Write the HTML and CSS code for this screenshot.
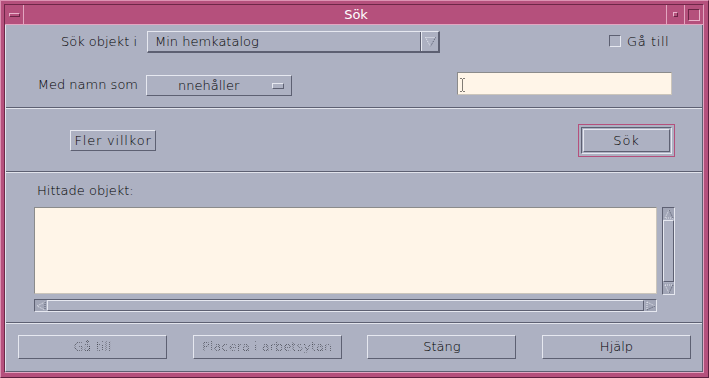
FILE: index.html
```html
<!DOCTYPE html>
<html lang="sv">
<head>
<meta charset="utf-8">
<title>Sök</title>
<link rel="stylesheet" href="styles.css">
</head>
<body>
<div class="window">
  <div class="inner">
    <div class="titlebar">
      <div class="tb-menu"><span class="dash"></span></div>
      <div class="tb-title">Sök</div>
      <div class="tb-min"><span class="dot"></span></div>
      <div class="tb-max"><span class="sq"></span></div>
    </div>
    <div class="content">
      <div class="row row1">
        <span class="label l1">Sök objekt i</span>
        <div class="combo">
          <span class="combo-text">Min hemkatalog</span>
          <span class="combo-arrow">
            <svg width="13" height="12" viewBox="0 0 13 12">
              <path d="M1.5 1.5 L6.5 10.5" stroke="#e8eaf2" stroke-width="1" stroke-dasharray="1 1" fill="none"/>
              <path d="M1.5 1.5 L11.5 1.5" stroke="#e8eaf2" stroke-width="1" stroke-dasharray="1 1" fill="none"/>
              <path d="M11.5 1.5 L6.5 10.5" stroke="#555a6c" stroke-width="1" stroke-dasharray="1 1" fill="none"/>
            </svg>
          </span>
        </div>
        <div class="check"><span class="box"></span><span>Gå till</span></div>
      </div>
      <div class="row row2">
        <span class="label l2">Med namn som</span>
        <div class="optmenu"><span class="opt-text">nnehåller</span><span class="ind"></span></div>
        <div class="textfield">
          <svg class="ibeam" width="5" height="14" viewBox="0 0 5 14">
            <path d="M0.5 0.5 h1 M3.5 0.5 h1 M2.5 1.5 v11 M0.5 13.5 h1 M3.5 13.5 h1" stroke="#000" stroke-width="1" stroke-dasharray="1 1" fill="none"/>
          </svg>
        </div>
      </div>
      <div class="sep sep1"></div>
      <div class="row row3">
        <button class="btn fler">Fler villkor</button>
        <div class="default">
          <div class="etch">
            <button class="btn sok">Sök</button>
          </div>
        </div>
      </div>
      <div class="sep sep2"></div>
      <div class="found">Hittade objekt:</div>
      <div class="listarea">
        <div class="listrow">
          <div class="list"></div>
          <div class="vscroll">
            <div class="arrowbox">
              <svg width="10" height="10" viewBox="0 0 10 10"><path d="M5 1 L1 9 L9 9" stroke="#e8eaf2" stroke-dasharray="1 1" fill="none"/><path d="M5 1 L9 9" stroke="#555a6c" stroke-dasharray="1 1" fill="none"/></svg>
            </div>
            <div class="vthumb"></div>
            <div class="arrowbox">
              <svg width="10" height="10" viewBox="0 0 10 10"><path d="M1 1 L5 9 M1 1 L9 1" stroke="#e8eaf2" stroke-dasharray="1 1" fill="none"/><path d="M9 1 L5 9" stroke="#555a6c" stroke-dasharray="1 1" fill="none"/></svg>
            </div>
          </div>
        </div>
        <div class="hscroll">
          <div class="arrowbox">
            <svg width="10" height="10" viewBox="0 0 10 10"><path d="M9 1 L1 5 L9 9" stroke="#e8eaf2" stroke-dasharray="1 1" fill="none"/><path d="M9 1 L9 9" stroke="#555a6c" stroke-dasharray="1 1" fill="none"/></svg>
          </div>
          <div class="hthumb"></div>
          <div class="arrowbox">
            <svg width="10" height="10" viewBox="0 0 10 10"><path d="M1 1 L9 5 M1 1 L1 9" stroke="#e8eaf2" stroke-dasharray="1 1" fill="none"/><path d="M9 5 L1 9" stroke="#555a6c" stroke-dasharray="1 1" fill="none"/></svg>
          </div>
        </div>
      </div>
      <div class="sep sep3"></div>
      <div class="buttons">
        <button class="btn bottom disabled"><span class="stipple">Gå till</span></button>
        <button class="btn bottom disabled"><span class="stipple">Placera i arbetsytan</span></button>
        <button class="btn bottom">Stäng</button>
        <button class="btn bottom">Hjälp</button>
      </div>
    </div>
  </div>
</div>
</body>
</html>
```

FILE: styles.css
```css
* { box-sizing: border-box; }

body {
  margin: 0;
  background: #adb1c2;
  font-family: "DejaVu Sans", "Liberation Sans", sans-serif;
  font-size: 13px;
  font-weight: 300;
  color: #000;
}

.window {
  width: 709px;
  height: 378px;
  background: #b5507c;
  border: 1px solid;
  border-color: #dc93b3 #5e1f3e #5e1f3e #dc93b3;
  padding: 3px 4px 4px 3px;
}

.inner {
  height: 100%;
  border: 1px solid;
  border-color: #6e2748 #e3a6c1 #e3a6c1 #6e2748;
  display: flex;
  flex-direction: column;
}

/* Title bar */
.titlebar {
  height: 20px;
  display: flex;
  border-bottom: 1px solid #e3a6c1;
  background: #b5507c;
}

.tb-menu {
  width: 19px;
  border-right: 1px solid #e3a6c1;
  display: flex;
  align-items: center;
  justify-content: center;
}

.dash {
  width: 11px;
  height: 4px;
  border: 1px solid;
  border-color: #eab3cb #6a2545 #6a2545 #eab3cb;
}

.tb-title {
  flex: 1;
  color: #fff;
  font-weight: 400;
  text-align: center;
  line-height: 19px;
  padding-left: 22px;
  border-right: 1px solid #e3a6c1;
}

.tb-min {
  width: 18px;
  border-right: 1px solid #e3a6c1;
  display: flex;
  align-items: center;
  justify-content: center;
}

.dot {
  width: 5px;
  height: 5px;
  border: 1px solid;
  border-color: #eab3cb #6a2545 #6a2545 #eab3cb;
}

.tb-max {
  width: 18px;
  display: flex;
  align-items: center;
  justify-content: center;
}

.sq {
  width: 12px;
  height: 12px;
  border: 1px solid;
  border-color: #6a2545 #eab3cb #eab3cb #6a2545;
}

/* Content */
.content {
  flex: 1;
  background: #adb1c2;
  border-left: 1px solid #e2e4ec;
  border-right: 1px solid #5d6072;
  border-bottom: 1px solid #5d6072;
  display: flex;
  flex-direction: column;
}

.row { display: flex; }

.label { text-align: right; white-space: nowrap; }

.row1 {
  margin-top: 6px;
  height: 22px;
  align-items: center;
}

.l1 { width: 131px; margin-top: -2px; }

.combo {
  margin-left: 10px;
  width: 293px;
  height: 22px;
  display: flex;
  border-style: solid;
  border-width: 1px 2px 2px 1px;
  border-color: #e6e8f0 #5d6072 #5d6072 #e6e8f0;
}

.combo-text {
  flex: 1;
  padding-left: 7px;
  line-height: 20px;
}

.combo-arrow {
  width: 18px;
  border-left: 1px solid #5d6072;
  box-shadow: inset 1px 0 0 #e6e8f0;
  display: flex;
  align-items: center;
  justify-content: center;
  padding-left: 2px;
}

.check {
  margin-left: 169px;
  display: flex;
  align-items: center;
  gap: 6px;
  margin-top: -2px;
  letter-spacing: 0.6px;
}

.box {
  width: 12px;
  height: 12px;
  border: 1px solid;
  border-color: #5d6072 #e6e8f0 #e6e8f0 #5d6072;
}

.row2 {
  margin-top: 19px;
  height: 24px;
  align-items: flex-start;
}

.l2 {
  width: 132px;
  line-height: 18px;
  margin-top: 4px;
}

.optmenu {
  margin-left: 8px;
  margin-top: 3px;
  width: 146px;
  height: 21px;
  border: 1px solid;
  border-color: #e6e8f0 #5d6072 #5d6072 #e6e8f0;
  display: flex;
  align-items: center;
}

.opt-text {
  flex: 1;
  padding-left: 31px;
  line-height: 19px;
}

.ind {
  width: 12px;
  height: 6px;
  margin-right: 7px;
  border: 1px solid;
  border-color: #e6e8f0 #5d6072 #5d6072 #e6e8f0;
}

.textfield {
  margin-left: 165px;
  width: 215px;
  height: 23px;
  background: #fff5e8;
  border: 1px solid;
  border-color: #8b8b8b #cbc5bb #cbc5bb #8b8b8b;
  padding: 5px 0 0 2px;
}

.ibeam { display: block; }

.sep {
  height: 2px;
  border-top: 1px solid #5d6072;
  border-bottom: 1px solid #e2e4ec;
}

.sep1 { margin-top: 11px; }

.row3 {
  margin-top: 15px;
  height: 33px;
  align-items: flex-start;
}

.btn {
  font-family: inherit;
  font-size: 13px;
  font-weight: 300;
  color: #000;
  background: #adb1c2;
  border: 1px solid;
  border-color: #e6e8f0 #5d6072 #5d6072 #e6e8f0;
  padding: 0;
  margin: 0;
}

.fler {
  margin-left: 64px;
  margin-top: 6px;
  width: 86px;
  height: 21px;
  line-height: 19px;
  letter-spacing: 0.8px;
}

.default {
  margin-left: 422px;
  width: 97px;
  height: 33px;
  border: 1px solid #b5507c;
  padding: 2px;
}

.etch {
  height: 100%;
  border: 1px solid;
  border-color: #5d6072 #e6e8f0 #e6e8f0 #5d6072;
  padding: 1px;
}

.sok {
  display: block;
  width: 100%;
  height: 100%;
  line-height: 19px;
  letter-spacing: 1px;
}

.sep2 { margin-top: 14px; }

.found {
  margin-top: 10px;
  margin-left: 31px;
  line-height: 16px;
}

.listarea {
  margin-top: 8px;
  margin-left: 28px;
  display: flex;
  flex-direction: column;
  gap: 4px;
}

.listrow {
  display: flex;
  gap: 5px;
}

.list {
  width: 623px;
  height: 87px;
  background: #fff5e8;
  border: 1px solid;
  border-color: #8b8b8b #cbc5bb #cbc5bb #8b8b8b;
}

.vscroll {
  width: 13px;
  height: 88px;
  display: flex;
  flex-direction: column;
  border: 1px solid;
  border-color: #5d6072 #e6e8f0 #e6e8f0 #5d6072;
}

.arrowbox {
  flex: none;
  width: 11px;
  height: 11px;
  background: #a2a6b7;
  display: flex;
  align-items: center;
  justify-content: center;
}

.vthumb {
  flex: 1;
  margin: 1px 0;
  border: 1px solid;
  border-color: #e6e8f0 #5d6072 #5d6072 #e6e8f0;
}

.hscroll {
  width: 623px;
  height: 13px;
  display: flex;
  border: 1px solid;
  border-color: #5d6072 #e6e8f0 #e6e8f0 #5d6072;
}

.hthumb {
  flex: 1;
  margin: 0 1px;
  border: 1px solid;
  border-color: #e6e8f0 #5d6072 #5d6072 #e6e8f0;
}

.sep3 { margin-top: 10px; }

.buttons {
  margin-top: 11px;
  padding: 0 11px 0 12px;
  display: flex;
  justify-content: space-between;
}

.bottom {
  width: 149px;
  height: 24px;
  line-height: 22px;
}

.stipple {
  color: transparent;
  background-image: conic-gradient(#2a2c34 25%, transparent 0 50%, #2a2c34 0 75%, transparent 0);
  background-size: 2px 2px;
  -webkit-background-clip: text;
  background-clip: text;
}
```
